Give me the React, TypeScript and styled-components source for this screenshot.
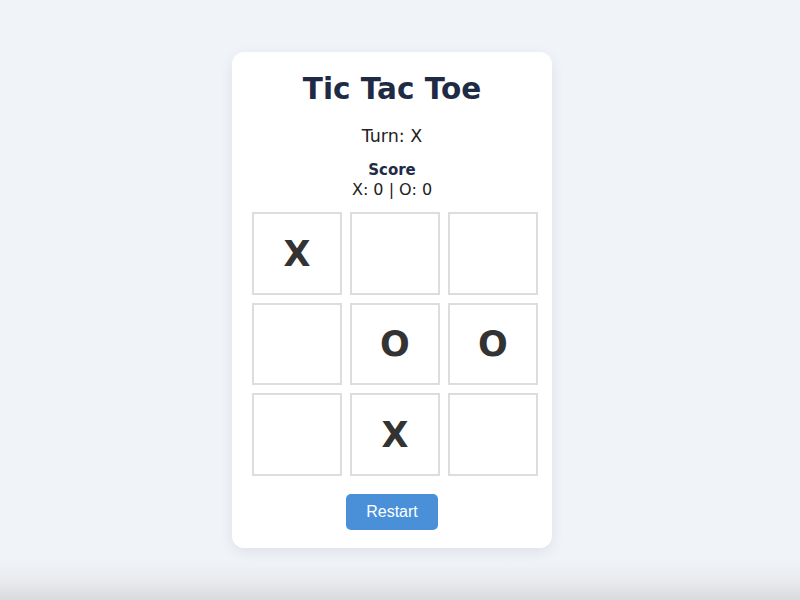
import React, { useState } from "react";
import styled, { createGlobalStyle } from "styled-components";

const GlobalStyle = createGlobalStyle`
    html, body {
        margin: 0;
        padding: 0;
    }
    body {
        font-family: Verdana, "DejaVu Sans", sans-serif;
        background: linear-gradient(to bottom, #f0f3f8 0, #f0f3f8 560px, #e9ebef 580px, #d9dadd 600px);
    }
`;

const Page = styled.main`
    min-height: 100vh;
    display: flex;
    justify-content: center;
    align-items: center;
    padding-right: 16px;
    box-sizing: border-box;
`;

const Card = styled.section`
    width: 280px;
    padding: 20px 20px 18px;
    background: #ffffff;
    border-radius: 12px;
    box-shadow: 0 4px 14px rgba(0, 0, 0, 0.08);
    display: flex;
    flex-direction: column;
    align-items: center;
`;

const Title = styled.h1`
    margin: 0 0 20px;
    font-size: 29.5px;
    line-height: 34px;
    font-weight: 700;
    color: #1f2b45;
`;

const Turn = styled.p`
    margin: 0 0 15px;
    font-size: 17.5px;
    line-height: 20px;
    color: #222;
`;

const ScoreBox = styled.div`
    text-align: center;
    margin-bottom: 13px;
    color: #1f2b45;
`;

const ScoreLabel = styled.div`
    font-size: 15px;
    font-weight: 700;
    line-height: 19px;
`;

const ScoreLine = styled.div`
    font-size: 16px;
    line-height: 19px;
    color: #222;
`;

const Board = styled.div`
    display: grid;
    grid-template-columns: repeat(3, 90px);
    grid-auto-rows: 82.5px;
    column-gap: 8px;
    row-gap: 8px;
    align-self: flex-start;
`;

const Cell = styled.button`
    box-sizing: border-box;
    width: 90px;
    height: 82.5px;
    border: 2px solid #dddddd;
    background: #ffffff;
    padding: 0;
    font-family: Verdana, "DejaVu Sans", sans-serif;
    font-size: 35px;
    font-weight: 700;
    color: #333333;
    display: flex;
    justify-content: center;
    align-items: center;
    cursor: pointer;
`;

const RestartButton = styled.button`
    margin-top: 18px;
    width: 92px;
    height: 36px;
    border: none;
    border-radius: 5px;
    background: #4a90d9;
    color: #ffffff;
    font-family: "Liberation Sans", Arial, sans-serif;
    font-size: 16px;
    cursor: pointer;
`;

type Mark = "X" | "O" | null;

const initial: Mark[] = ["X", null, null, null, "O", "O", null, "X", null];

export default function App() {
    const [cells, setCells] = useState<Mark[]>(initial);
    const [turn, setTurn] = useState<"X" | "O">("X");

    const play = (i: number) => {
        if (cells[i]) return;
        const next = [...cells];
        next[i] = turn;
        setCells(next);
        setTurn(turn === "X" ? "O" : "X");
    };

    const restart = () => {
        setCells(Array(9).fill(null));
        setTurn("X");
    };

    return (
        <>
            <GlobalStyle />
            <Page>
                <Card>
                    <Title>Tic Tac Toe</Title>
                    <Turn>Turn: {turn}</Turn>
                    <ScoreBox>
                        <ScoreLabel>Score</ScoreLabel>
                        <ScoreLine>X: 0 | O: 0</ScoreLine>
                    </ScoreBox>
                    <Board>
                        {cells.map((c, i) => (
                            <Cell key={i} onClick={() => play(i)}>
                                {c}
                            </Cell>
                        ))}
                    </Board>
                    <RestartButton onClick={restart}>Restart</RestartButton>
                </Card>
            </Page>
        </>
    );
}
